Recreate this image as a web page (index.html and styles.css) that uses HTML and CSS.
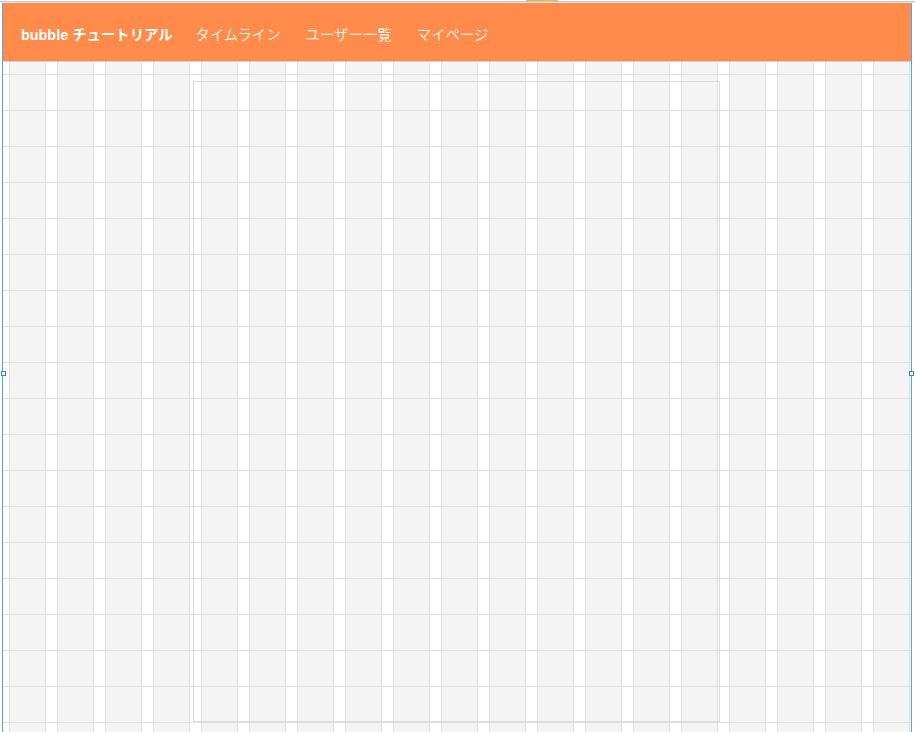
FILE: index.html
```html
<!DOCTYPE html>
<html lang="ja">
  <head>
    <meta charset="UTF-8" />
    <meta name="viewport" content="width=device-width, initial-scale=1.0" />
    <title>bubble チュートリアル</title>
    <link rel="stylesheet" href="styles.css">
  </head>
  <body>
    <div class="ruler"><span class="tab"></span></div>
    <div class="rule"></div>

    <div class="frame">
      <header class="header">
        <span class="brand">bubble チュートリアル</span>
        <nav class="nav">
          <a href="#">タイムライン</a>
          <a href="#">ユーザー一覧</a>
          <a href="#">マイページ</a>
        </nav>
      </header>

      <main class="canvas">
        <div class="group"></div>
      </main>

      <span class="handle left"></span>
      <span class="handle right"></span>
    </div>
  </body>
</html>
```

FILE: styles.css
```css
html,
body {
  margin: 0;
  height: 100%;
  overflow: hidden;
  background: white;
}

body {
  font-family: "Liberation Sans", "Noto Sans CJK JP", sans-serif;
}

.ruler {
  height: 1px;
}

.tab {
  display: block;
  width: 32px;
  height: 1px;
  margin-left: 526px;
  background: #f5b042;
}

.rule {
  height: 1px;
  background: #c6c6c6;
  border-bottom: 1px solid #ececec;
}

.frame {
  position: relative;
  width: 908px;
  margin-left: 2px;
  border-left: 1px solid #4aa9ee;
  border-right: 1px solid #4aa9ee;
}

.header {
  display: flex;
  align-items: center;
  height: 59px;
  padding: 3px 0 0 18px;
  box-sizing: border-box;
  background: #ff8b4b;
  border-bottom: 1px solid #d4d4d4;
  color: white;
  font-size: 14.4px;
}

.brand {
  font-weight: bold;
  margin-right: 10px;
}

.nav {
  display: flex;
}

.nav a {
  padding: 0 12.5px;
  color: rgba(255, 255, 255, 0.88);
  text-decoration: none;
}

.canvas {
  height: 670px;
  padding: 19px 0 0 190px;
  box-sizing: border-box;
  background-color: #f4f4f4;
  background-image:
    linear-gradient(to bottom, transparent 12px, #dedede 12px, #dedede 13px, transparent 13px),
    linear-gradient(to right, #dedede 0 1px, transparent 1px 36px, #dedede 36px 37px, white 37px 48px);
  background-size: 100% 36px, 48px 100%;
  background-position: 0 0, 6px 0;
}

.group {
  width: 527px;
  height: 641px;
  box-sizing: border-box;
  border: 1px solid #dcdcdc;
}

.handle {
  position: absolute;
  top: 368px;
  width: 5px;
  height: 5px;
  box-sizing: border-box;
  border: 1px solid #2a86ee;
  background: white;
}

.handle.left {
  left: -2px;
}

.handle.right {
  right: -3px;
}
```
